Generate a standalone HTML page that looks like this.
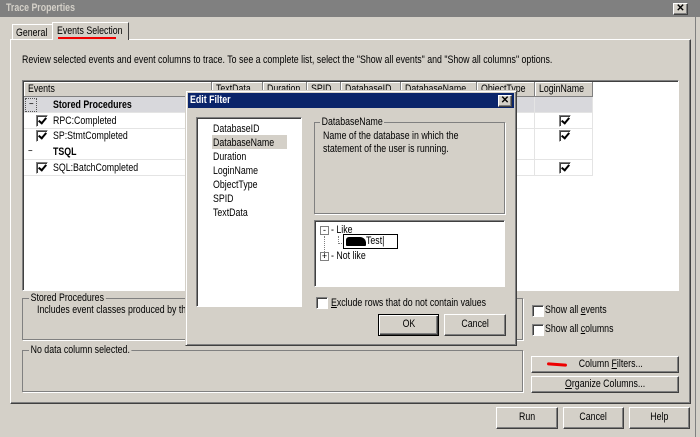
<!DOCTYPE html>
<html><head><style>
*{margin:0;padding:0;box-sizing:border-box}
body{width:700px;height:437px;background:#d4d0c8;font-family:"Liberation Sans",sans-serif;font-size:11px;color:#000;position:relative;overflow:hidden}
.a{position:absolute}
.t{position:absolute;white-space:nowrap;line-height:13px;transform:scaleX(0.8);transform-origin:0 0}
.s{display:inline-block;transform:scaleX(0.8);white-space:nowrap}
.raise{border:1px solid;border-color:#fff #404040 #404040 #fff;box-shadow:inset -1px -1px #808080}
.sunk{border:1px solid;border-color:#808080 #fff #fff #808080;box-shadow:inset 1px 1px #404040}
.btn{position:absolute;background:#d4d0c8;border:1px solid;border-color:#fff #404040 #404040 #fff;box-shadow:inset -1px -1px #808080;text-align:center;line-height:19px;white-space:nowrap}
.grp{position:absolute;border:1px solid #808080;box-shadow:1px 1px #fff}
.grp span{position:absolute;top:-7px;left:6px;background:#d4d0c8;padding:0 2px;line-height:12px;white-space:nowrap;transform:scaleX(0.8);transform-origin:0 0}
.cb{position:absolute;width:12px;height:12px;background:#fff;border:1px solid;border-color:#808080 #fff #fff #808080;box-shadow:inset 1px 1px #404040}
.ck::after{content:"";position:absolute;left:3px;top:0px;width:3px;height:6px;border:solid #000;border-width:0 2px 2px 0;transform:rotate(40deg)}
.hd{position:absolute;top:0;height:15px;background:#d4d0c8;border-right:1px solid #808080;border-bottom:1px solid #808080;box-shadow:inset 1px 1px #fff;padding-left:4px;line-height:14px;white-space:nowrap;overflow:hidden}
.hd span{display:inline-block;transform:scaleX(0.8);transform-origin:0 0}
.row{position:absolute;left:0;width:569px;height:16px;border-bottom:1px solid #e4e4e4;background:#fff}
</style></head><body>
<!-- title bar -->
<div class="a" style="left:0;top:0;width:700px;height:17px;background:#808080"></div>
<div class="t" style="left:6px;top:2px;color:#d4d0c8;font-weight:bold;font-size:11px">Trace Properties</div>
<div class="a raise" style="left:673px;top:3px;width:15px;height:12px;background:#d4d0c8;font-size:10px;font-weight:bold;text-align:center;line-height:10px">✕</div>
<div class="a" style="left:695px;top:17px;width:5px;height:420px;border-left:1px solid #808080"></div>

<!-- tabs -->
<div class="a" style="left:12px;top:24px;width:42px;height:16px;border:1px solid;border-color:#fff #404040 transparent #fff;border-bottom:none"></div>
<div class="t" style="left:16px;top:27px">General</div>
<div class="a" style="left:52px;top:22px;width:77px;height:18px;background:#d4d0c8;border:1px solid;border-color:#fff #404040 transparent #fff;border-bottom:none;z-index:2"></div>
<div class="t" style="left:57px;top:25px;z-index:3">Events Selection</div>
<div class="a" style="left:58px;top:37px;width:58px;height:2px;background:#e00;z-index:3"></div>
<!-- panel -->
<div class="a" style="left:10px;top:39px;width:681px;height:365px;border:1px solid;border-color:#fff #404040 #404040 #fff;box-shadow:inset -1px -1px #808080"></div>

<div class="t" style="left:22px;top:54px">Review selected events and event columns to trace. To see a complete list, select the "Show all events" and "Show all columns" options.</div>

<!-- grid -->
<div class="a sunk" style="left:22px;top:80px;width:657px;height:211px;background:#fff"></div>
<div class="a" style="left:24px;top:82px;width:653px;height:207px;overflow:hidden">
 <div class="hd" style="left:0;width:188px"><span>Events</span></div>
 <div class="hd" style="left:188px;width:51px"><span>TextData</span></div>
 <div class="hd" style="left:239px;width:44px"><span>Duration</span></div>
 <div class="hd" style="left:283px;width:34px"><span>SPID</span></div>
 <div class="hd" style="left:317px;width:60px"><span>DatabaseID</span></div>
 <div class="hd" style="left:377px;width:76px"><span>DatabaseName</span></div>
 <div class="hd" style="left:453px;width:58px"><span>ObjectType</span></div>
 <div class="hd" style="left:511px;width:58px"><span>LoginName</span></div>
 <div class="row" style="top:15px;background:#d8d8dc"></div>
 <div class="row" style="top:31px"></div>
 <div class="row" style="top:47px"></div>
 <div class="row" style="top:62px"></div>
 <div class="row" style="top:78px"></div>
 <div class="a" style="left:510px;top:15px;width:1px;height:79px;background:#e4e4e4"></div>
 <div class="a" style="left:568px;top:15px;width:1px;height:79px;background:#e4e4e4"></div>
 <div class="t" style="left:5px;top:16px;font-size:10px">−</div>
 <div class="a" style="left:1px;top:16px;width:12px;height:14px;border:1px dotted #555"></div>
 <div class="t" style="left:29px;top:17px;font-weight:bold">Stored Procedures</div>
 <div class="cb ck" style="left:12px;top:33px"></div><div class="t" style="left:29px;top:33px">RPC:Completed</div>
 <div class="cb ck" style="left:12px;top:48px"></div><div class="t" style="left:29px;top:48px">SP:StmtCompleted</div>
 <div class="t" style="left:4px;top:63px;font-size:10px">−</div>
 <div class="t" style="left:29px;top:64px;font-weight:bold">TSQL</div>
 <div class="cb ck" style="left:12px;top:80px"></div><div class="t" style="left:29px;top:80px">SQL:BatchCompleted</div>
 <div class="cb ck" style="left:535px;top:33px"></div>
 <div class="cb ck" style="left:535px;top:48px"></div>
 <div class="cb ck" style="left:535px;top:80px"></div>
</div>

<!-- bottom groups -->
<div class="grp" style="left:22px;top:298px;width:501px;height:42px"><span>Stored Procedures</span></div>
<div class="t" style="left:37px;top:304px">Includes event classes produced by the execution of stored procedures.</div>
<div class="grp" style="left:22px;top:350px;width:501px;height:42px"><span>No data column selected.</span></div>
<div class="cb" style="left:532px;top:305px"></div><div class="t" style="left:545px;top:304px">Show all <u>e</u>vents</div>
<div class="cb" style="left:532px;top:324px"></div><div class="t" style="left:545px;top:323px">Show all <u>c</u>olumns</div>
<div class="btn" style="left:531px;top:356px;width:148px;height:17px;line-height:15px"><span class="s">&nbsp;&nbsp;&nbsp;&nbsp;&nbsp;Column <u>F</u>ilters...</span></div>
<div class="a" style="left:547px;top:363px;width:20px;height:3px;background:#e00;border-radius:2px;transform:rotate(4deg)"></div>
<div class="btn" style="left:531px;top:376px;width:148px;height:17px;line-height:15px"><span class="s"><u>O</u>rganize Columns...</span></div>

<div class="btn" style="left:496px;top:407px;width:62px;height:22px"><span class="s">Run</span></div>
<div class="btn" style="left:563px;top:407px;width:61px;height:22px"><span class="s">Cancel</span></div>
<div class="btn" style="left:629px;top:407px;width:61px;height:22px"><span class="s">Help</span></div>

<!-- Edit Filter dialog -->
<div class="a" style="left:185px;top:90px;width:332px;height:256px;background:#d4d0c8;border:1px solid;border-color:#d4d0c8 #404040 #404040 #d4d0c8;box-shadow:inset 1px 1px #fff,inset -1px -1px #808080;z-index:5">
 <div class="a" style="left:2px;top:2px;width:326px;height:15px;background:#0a246a"></div>
 <div class="t" style="left:4px;top:3px;color:#fff;font-weight:bold">Edit Filter</div>
 <div class="a raise" style="left:312px;top:4px;width:14px;height:12px;background:#d4d0c8;font-size:10px;font-weight:bold;text-align:center;line-height:10px">✕</div>
 <div class="a sunk" style="left:10px;top:26px;width:106px;height:190px;background:#fff"></div>
 <div class="t" style="left:27px;top:32px">DatabaseID</div>
 <div class="a" style="left:26px;top:44px;width:75px;height:14px;background:#d4d0c8"></div>
 <div class="t" style="left:27px;top:46px">DatabaseName</div>
 <div class="t" style="left:27px;top:60px">Duration</div>
 <div class="t" style="left:27px;top:74px">LoginName</div>
 <div class="t" style="left:27px;top:88px">ObjectType</div>
 <div class="t" style="left:27px;top:102px">SPID</div>
 <div class="t" style="left:27px;top:116px">TextData</div>
 <div class="a" style="left:128px;top:31px;width:191px;height:92px;border:1px solid #808080;box-shadow:1px 1px #fff"></div>
 <div class="t" style="left:134px;top:25px;background:#d4d0c8;padding:0 2px">DatabaseName</div>
 <div class="t" style="left:137px;top:39px">Name of the database in which the<br>statement of the user is running.</div>
 <div class="a sunk" style="left:128px;top:129px;width:191px;height:67px;background:#fff"></div>
 <div class="a" style="left:134px;top:135px;width:9px;height:9px;border:1px solid #808080;font-size:9px;line-height:6px;text-align:center">-</div>
 <div class="t" style="left:145px;top:133px">- Like</div>
 <div class="a" style="left:138px;top:145px;width:1px;height:22px;border-left:1px dotted #808080"></div>
 <div class="a" style="left:152px;top:145px;width:6px;height:8px;border-left:1px dotted #808080;border-bottom:1px dotted #808080"></div>
 <div class="a" style="left:157px;top:143px;width:55px;height:15px;border:1px solid #000;background:#fff"></div>
 <div class="a" style="left:160px;top:146px;width:20px;height:9px;background:#000;border-radius:3px 6px 1px 1px"></div>
 <div class="t" style="left:180px;top:144px">Test|</div>
 <div class="a" style="left:134px;top:161px;width:9px;height:9px;border:1px solid #808080;font-size:9px;line-height:7px;text-align:center">+</div>
 <div class="t" style="left:145px;top:159px">- Not like</div>
 <div class="cb" style="left:130px;top:206px"></div>
 <div class="t" style="left:145px;top:206px"><u>E</u>xclude rows that do not contain values</div>
 <div class="btn" style="left:192px;top:223px;width:61px;height:22px;border:1px solid #000;box-shadow:inset 1px 1px #fff,inset -1px -1px #404040,inset -2px -2px #808080"><span class="s">OK</span></div>
 <div class="btn" style="left:258px;top:223px;width:62px;height:22px"><span class="s">Cancel</span></div>
</div>
</body></html>
